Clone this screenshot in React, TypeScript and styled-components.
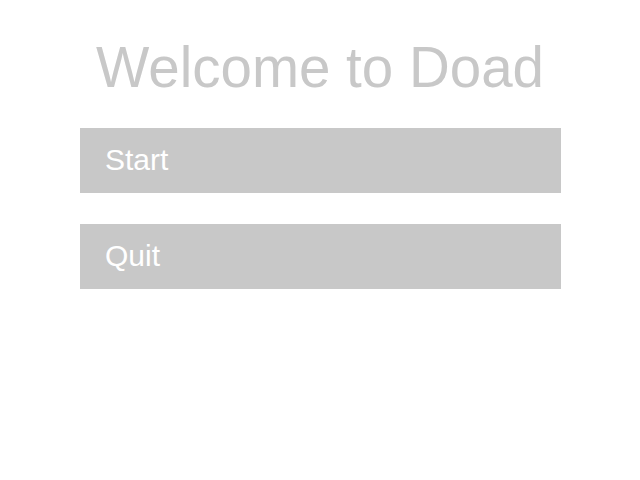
import React from "react";
import styled, { createGlobalStyle } from "styled-components";

const Global = createGlobalStyle`
  html, body { margin: 0; padding: 0; background: #ffffff; }
  body { font-family: "Liberation Sans", Arial, sans-serif; }
`;

const Page = styled.main`
  width: 640px;
  height: 480px;
  display: flex;
  flex-direction: column;
  align-items: center;
  padding-top: 36px;
  box-sizing: border-box;
`;

const Title = styled.h1`
  margin: 0 0 28px;
  font-size: 56.5px;
  line-height: 64px;
  font-weight: 400;
  color: #c8c8c8;
  text-align: center;
`;

const Menu = styled.nav`
  display: flex;
  flex-direction: column;
  gap: 31.5px;
  width: 481px;
  margin-left: 1px;
`;

const MenuButton = styled.button`
  display: block;
  width: 100%;
  height: 64.5px;
  border: none;
  margin: 0;
  padding: 0 0 0 25px;
  background: #c8c8c8;
  color: #ffffff;
  font-family: "Liberation Sans", Arial, sans-serif;
  font-size: 30px;
  line-height: 64px;
  font-weight: 300;
  text-align: left;
  cursor: pointer;
`;

export default function App() {
  return (
    <>
      <Global />
      <Page>
        <Title>Welcome to Doad</Title>
        <Menu>
          <MenuButton>Start</MenuButton>
          <MenuButton>Quit</MenuButton>
        </Menu>
      </Page>
    </>
  );
}
